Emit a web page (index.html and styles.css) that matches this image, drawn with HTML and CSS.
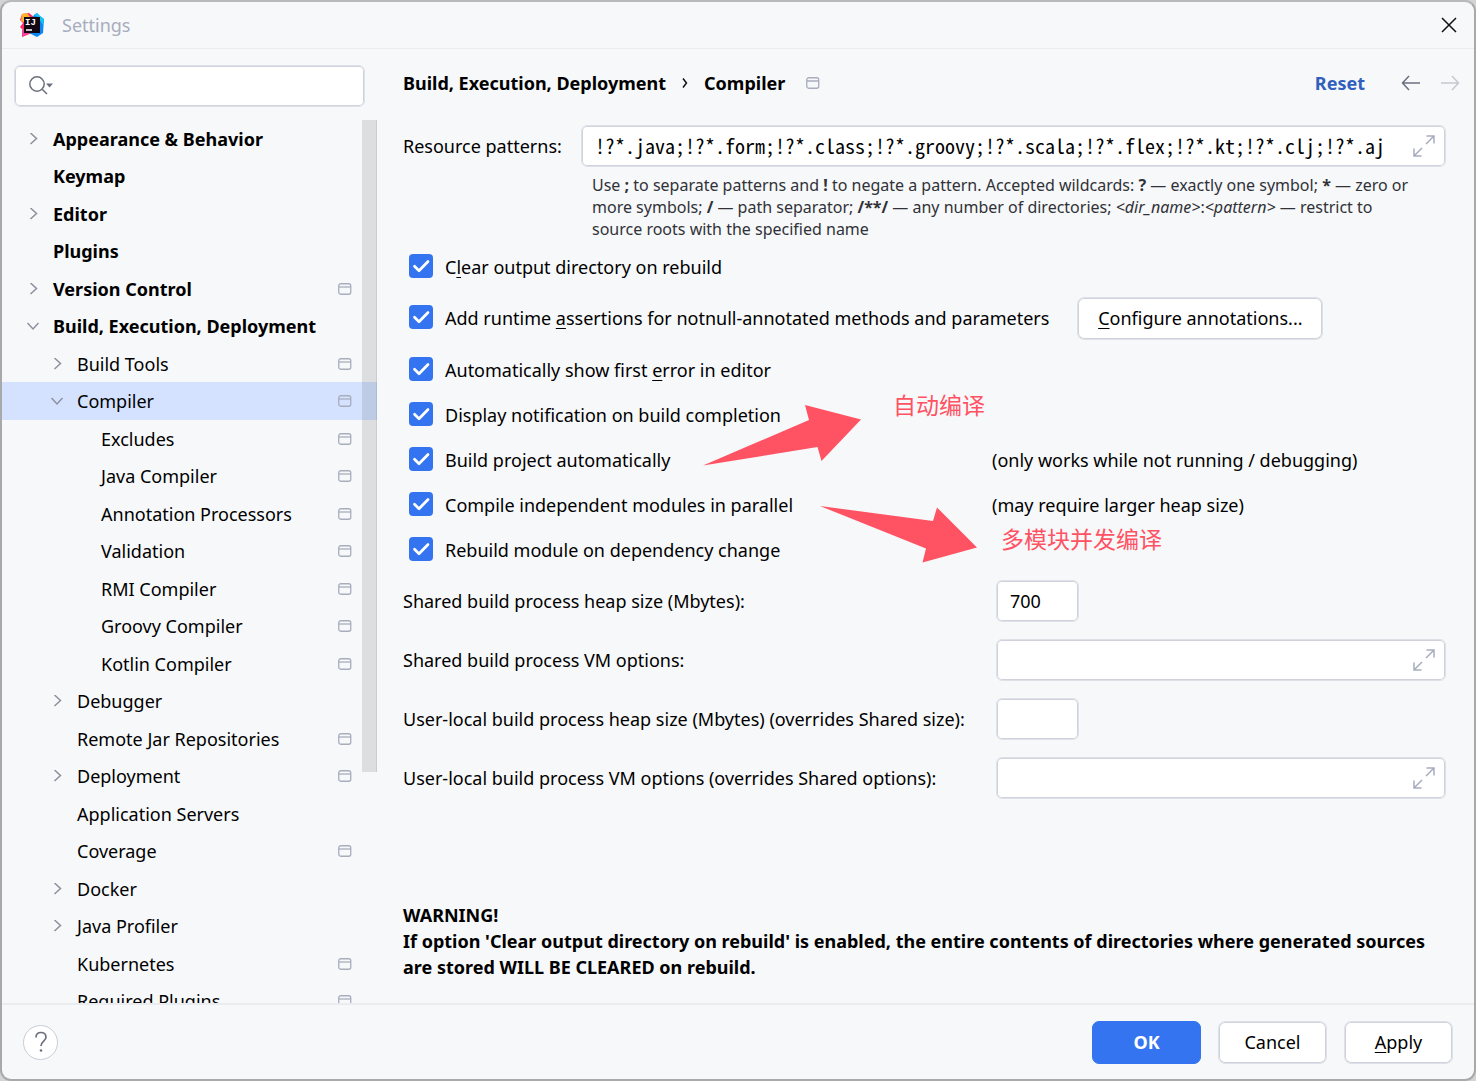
FILE: index.html
```html
<!DOCTYPE html>
<html lang="en">
<head>
<meta charset="utf-8">
<title>Settings</title>
<link rel="stylesheet" href="styles.css">
</head>
<body>
<svg class="defs" aria-hidden="true">
  <symbol id="module" viewBox="0 0 14 12"><rect x=".75" y=".75" width="12" height="10.5" rx="2" fill="none" stroke="#a8adbd" stroke-width="1.3"/><path d="M1 4H13" stroke="#a8adbd" stroke-width="1.3"/></symbol>
  <symbol id="right" viewBox="0 0 12 12"><path d="M3.500 0 9.500 5.500 3.500 11" fill="none" stroke="#8c909e" stroke-width="1.5"/></symbol>
  <symbol id="down" viewBox="0 0 12 12"><path d="M.5 3 6 9 11.500 3" fill="none" stroke="#8c909e" stroke-width="1.5"/></symbol>
  <symbol id="check" viewBox="0 0 24 24"><path d="M5.500 12.300 10 16.800 19 7.500" fill="none" stroke="#fff" stroke-width="2.700" stroke-linecap="round" stroke-linejoin="round"/></symbol>
  <symbol id="expand" viewBox="0 0 22 22"><path d="M13 9 21 1M13.500 1H21V8.500M9 13 1 21M1 13.500V21H8.500" fill="none" stroke="#a8adbd" stroke-width="1.500"/></symbol>
</svg>
<div class="window">
  <header class="titlebar">
    <svg class="logo" viewBox="0 0 24 24" aria-hidden="true">
      <path d="M2 1 9 0 14 4 12 20 2 24 3 17 0 14 3 10 0 7Z" fill="#fe2d6b"/>
      <path d="M2 1 7 0 10 4 4 9 1 8Z" fill="#fdb52a"/>
      <path d="M2 17 9 18 8 21 2 24Z" fill="#f5409b"/>
      <path d="M14 2 17 0 20 3 24 6 23 20 17 24 9 20 10 9Z" fill="#0a86f5"/>
      <path d="M14 2 17 0 20 3 24 6 23 12 18 4Z" fill="#17c5f5"/>
      <rect x="4" y="4" width="16" height="16" fill="#120712"/>
      <text x="5" y="12" class="logo-text">IJ</text>
      <path d="M6 17H12" stroke="#fff" stroke-width="1.500"/>
    </svg>
    <h1 class="title">Settings</h1>
    <button class="icon-button close" aria-label="Close"><svg viewBox="0 0 16 16" width="16" height="16"><path d="M1 1 15 15M15 1 1 15" stroke="#111" stroke-width="1.500"/></svg></button>
  </header>
  <div class="body">
    <aside class="sidebar">
      <div class="search">
        <svg width="26" height="20" viewBox="0 0 26 20" aria-hidden="true"><circle cx="9" cy="8" r="7.200" fill="none" stroke="#6c707e" stroke-width="1.500"/><path d="M14 13 19 18" stroke="#6c707e" stroke-width="1.500"/><path d="M18 7.500H25L21.500 11.500Z" fill="#6c707e"/></svg>
        <input type="search" aria-label="Search settings">
      </div>
      <nav class="tree" aria-label="Settings categories">
        <ul>
          <li class="top"><svg class="arrow"><use href="#right"/></svg><a href="#">Appearance &amp; Behavior</a></li>
          <li class="top leaf"><a href="#">Keymap</a></li>
          <li class="top"><svg class="arrow"><use href="#right"/></svg><a href="#">Editor</a></li>
          <li class="top leaf"><a href="#">Plugins</a></li>
          <li class="top"><svg class="arrow"><use href="#right"/></svg><a href="#">Version Control</a><svg class="module"><use href="#module"/></svg></li>
          <li class="top"><svg class="arrow"><use href="#down"/></svg><a href="#">Build, Execution, Deployment</a></li>
          <li class="sub"><svg class="arrow"><use href="#right"/></svg><a href="#">Build Tools</a><svg class="module"><use href="#module"/></svg></li>
          <li class="sub selected"><svg class="arrow"><use href="#down"/></svg><a href="#" aria-current="page">Compiler</a><svg class="module"><use href="#module"/></svg></li>
          <li class="deep leaf"><a href="#">Excludes</a><svg class="module"><use href="#module"/></svg></li>
          <li class="deep leaf"><a href="#">Java Compiler</a><svg class="module"><use href="#module"/></svg></li>
          <li class="deep leaf"><a href="#">Annotation Processors</a><svg class="module"><use href="#module"/></svg></li>
          <li class="deep leaf"><a href="#">Validation</a><svg class="module"><use href="#module"/></svg></li>
          <li class="deep leaf"><a href="#">RMI Compiler</a><svg class="module"><use href="#module"/></svg></li>
          <li class="deep leaf"><a href="#">Groovy Compiler</a><svg class="module"><use href="#module"/></svg></li>
          <li class="deep leaf"><a href="#">Kotlin Compiler</a><svg class="module"><use href="#module"/></svg></li>
          <li class="sub"><svg class="arrow"><use href="#right"/></svg><a href="#">Debugger</a></li>
          <li class="sub leaf"><a href="#">Remote Jar Repositories</a><svg class="module"><use href="#module"/></svg></li>
          <li class="sub"><svg class="arrow"><use href="#right"/></svg><a href="#">Deployment</a><svg class="module"><use href="#module"/></svg></li>
          <li class="sub leaf"><a href="#">Application Servers</a></li>
          <li class="sub leaf"><a href="#">Coverage</a><svg class="module"><use href="#module"/></svg></li>
          <li class="sub"><svg class="arrow"><use href="#right"/></svg><a href="#">Docker</a></li>
          <li class="sub"><svg class="arrow"><use href="#right"/></svg><a href="#">Java Profiler</a></li>
          <li class="sub leaf"><a href="#">Kubernetes</a><svg class="module"><use href="#module"/></svg></li>
          <li class="sub leaf"><a href="#">Required Plugins</a><svg class="module"><use href="#module"/></svg></li>
        </ul>
        <div class="scrollbar"></div>
      </nav>
    </aside>
    <main class="content">
      <div class="page-header">
        <h2 class="crumbs"><span>Build, Execution, Deployment</span><svg width="6" height="12" viewBox="0 0 6 12" aria-hidden="true"><path d="M1 1.500 4.500 6 1 10.500" fill="none" stroke="#111" stroke-width="1.500"/></svg><span>Compiler</span></h2>
        <svg class="module"><use href="#module"/></svg>
        <a class="reset" href="#">Reset</a>
        <button class="icon-button back" aria-label="Back"><svg width="20" height="16" viewBox="0 0 20 16"><path d="M8 1 1.500 8 8 15M1.500 8H19" fill="none" stroke="#6c707e" stroke-width="1.500"/></svg></button>
        <button class="icon-button forward" aria-label="Forward" disabled><svg width="20" height="16" viewBox="0 0 20 16"><path d="M12 1 18.500 8 12 15M18.500 8H1" fill="none" stroke="#c6c8cf" stroke-width="1.500"/></svg></button>
      </div>
      <div class="patterns">
        <label for="patterns">Resource patterns:</label>
        <div class="field"><input class="mono" id="patterns" type="text" value="!?*.java;!?*.form;!?*.class;!?*.groovy;!?*.scala;!?*.flex;!?*.kt;!?*.clj;!?*.aj"><button class="icon-button" aria-label="Expand"><svg class="expand"><use href="#expand"/></svg></button></div>
        <p class="help">Use <b>;</b> to separate patterns and <b>!</b> to negate a pattern. Accepted wildcards: <b>?</b> — exactly one symbol; <b>*</b> — zero or more symbols; <b>/</b> — path separator; <b>/**/</b> — any number of directories; <i>&lt;dir_name&gt;</i>:<i>&lt;pattern&gt;</i> — restrict to source roots with the specified name</p>
      </div>
      <div class="options">
        <div class="option"><label><span class="box"><input type="checkbox" checked><svg><use href="#check"/></svg></span><span>C<u>l</u>ear output directory on rebuild</span></label></div>
        <div class="option with-button"><label><span class="box"><input type="checkbox" checked><svg><use href="#check"/></svg></span><span>Add runtime <u>a</u>ssertions for notnull-annotated methods and parameters</span></label><button class="button configure"><span><u>C</u>onfigure annotations...</span></button></div>
        <div class="option"><label><span class="box"><input type="checkbox" checked><svg><use href="#check"/></svg></span><span>Automatically show first <u>e</u>rror in editor</span></label></div>
        <div class="option"><label><span class="box"><input type="checkbox" checked><svg><use href="#check"/></svg></span><span>Display notification on build completion</span></label></div>
        <div class="option"><label><span class="box"><input type="checkbox" checked><svg><use href="#check"/></svg></span><span>Build project automatically</span></label><span>(only works while not running / debugging)</span></div>
        <div class="option"><label><span class="box"><input type="checkbox" checked><svg><use href="#check"/></svg></span><span>Compile independent modules in parallel</span></label><span>(may require larger heap size)</span></div>
        <div class="option"><label><span class="box"><input type="checkbox" checked><svg><use href="#check"/></svg></span><span>Rebuild module on dependency change</span></label></div>
        <svg class="note-arrow auto" width="160" height="62" viewBox="0 0 160 62" aria-hidden="true"><path d="M0 60.500 106 15 102 0 158 14.500 118.500 56 114.500 42Z" fill="#ff5263"/></svg>
        <span class="note auto-note" lang="zh">自动编译</span>
        <svg class="note-arrow parallel" width="160" height="62" viewBox="0 0 160 62" aria-hidden="true"><path d="M0 1 113 16 117 2.500 157 42.500 102.500 57.500 106 43.500Z" fill="#ff5263"/></svg>
        <span class="note parallel-note" lang="zh">多模块并发编译</span>
      </div>
      <div class="settings">
        <label for="heap">Shared build process heap size (Mbytes):</label>
        <div class="field small"><input id="heap" type="text" value="700"></div>
        <label for="vm">Shared build process VM options:</label>
        <div class="field"><input id="vm" type="text"><button class="icon-button" aria-label="Expand"><svg class="expand"><use href="#expand"/></svg></button></div>
        <label for="user-heap">User-local build process heap size (Mbytes) (overrides Shared size):</label>
        <div class="field small"><input id="user-heap" type="text"></div>
        <label for="user-vm">User-local build process VM options (overrides Shared options):</label>
        <div class="field"><input id="user-vm" type="text"><button class="icon-button" aria-label="Expand"><svg class="expand"><use href="#expand"/></svg></button></div>
      </div>
      <p class="warning">WARNING!<br>If option 'Clear output directory on rebuild' is enabled, the entire contents of directories where generated sources are stored WILL BE CLEARED on rebuild.</p>
    </main>
  </div>
  <footer class="footer">
    <button class="help-button" aria-label="Help"><svg width="14" height="22" viewBox="0 0 14 22"><path d="M2 6.500C2 3 4.300 1.500 7 1.500S12 3.200 12 6.200C12 10 7 10.500 7 15" fill="none" stroke="#6c707e" stroke-width="1.700"/><circle cx="7" cy="19.500" r="1.300" fill="#6c707e"/></svg></button>
    <button class="button primary">OK</button>
    <button class="button">Cancel</button>
    <button class="button"><span><u>A</u>pply</span></button>
  </footer>
</div>
</body>
</html>
```
FILE: styles.css
```css
* { box-sizing: border-box; }
body {
  margin: 0;
  background: #d4d4d4;
  color: #000;
  font: 18px/26px "Noto Sans", "Noto Sans CJK SC", sans-serif;
}
h1, h2, p, ul { margin: 0; padding: 0; }
a { color: inherit; text-decoration: none; }
u { text-underline-offset: 3px; text-decoration-skip-ink: none; }
svg { display: block; flex: none; }
.defs { display: none; }
button, input { font: inherit; color: inherit; }
.icon-button { display: flex; padding: 0; border: 0; background: none; }

.window {
  display: flex;
  flex-direction: column;
  height: 100vh;
  border: 2px solid #a9a9ab;
  border-top-color: #b9b9b9;
  border-radius: 11px;
  background: #f7f8fa;
  overflow: hidden;
}
.titlebar {
  display: flex;
  align-items: center;
  height: 47px;
  padding: 0 17px 0 18px;
  border-bottom: 1px solid #ebecf0;
}
.logo { width: 24px; height: 24px; }
.logo-text { font: bold 9px "Liberation Mono", monospace; fill: #fff; }
.title { margin-left: 18px; color: #a8adbd; font-size: 18px; font-weight: 400; }
.close { margin-left: auto; }

.body { display: grid; grid-template-columns: 375px 1fr; flex: 1; min-height: 0; }
.sidebar { display: flex; flex-direction: column; min-height: 0; }
.search, .field {
  display: flex;
  align-items: center;
  height: 42px;
  border: 1px solid #dfe1e8;
  border-radius: 6px;
  background: #fff;
  box-shadow: inset 0 0 0 1px #cfd1dc;
}
.search { flex: none; margin: 16px 12px 13px; padding-left: 13px; }
.search input, .field input {
  flex: 1;
  min-width: 0;
  padding: 0 13px;
  border: 0;
  outline: 0;
  background: none;
}
.tree { position: relative; flex: 1; min-height: 0; overflow: hidden; }
.tree ul { list-style: none; }
.tree li { display: flex; align-items: center; gap: 14px; height: 37px; padding-right: 25px; }
.tree li:nth-child(even) { height: 38px; }
.tree .top { padding-left: 25px; font-weight: 700; }
.tree .sub { padding-left: 49px; }
.tree .top.leaf { padding-left: 51px; }
.tree .sub.leaf { padding-left: 75px; }
.tree .deep { padding-left: 99px; }
.tree .selected { background: #d4e2ff; }
.tree a { flex: 1; white-space: nowrap; }
.arrow { width: 12px; height: 12px; }
.module { width: 14px; height: 12px; }
.scrollbar {
  position: absolute;
  top: 0;
  right: 0;
  width: 15px;
  height: 652px;
  border-right: 1px solid rgba(0, 0, 0, .08);
  background: rgba(0, 0, 0, .1);
}

.content { display: flex; flex-direction: column; min-width: 0; padding: 0 28px 23px 26px; }
.page-header { display: flex; align-items: center; height: 68px; margin-right: -14px; }
.crumbs { display: flex; align-items: center; gap: 16px; margin-right: 21px; font-size: 18px; }
.reset { margin-left: auto; color: #315fbd; font-weight: 700; }
.back { margin: 0 19px 0 36px; }

.patterns { display: grid; grid-template-columns: 178px 1fr; align-items: center; padding-top: 8px; }
.patterns .mono { font-family: "Noto Sans Mono CJK SC", monospace; font-size: 20px; }
.field .icon-button { margin-right: 10px; }
.expand { width: 22px; height: 22px; }
.help { grid-column: 2; padding: 7px 24px 0 11px; color: #303238; font-size: 16px; line-height: 22px; }

.options { position: relative; padding-top: 4px; }
.option { display: grid; grid-template-columns: 589px 1fr; align-items: center; height: 45px; }
.option label { display: flex; align-items: center; gap: 12px; padding-left: 6px; white-space: nowrap; }
.with-button { display: flex; gap: 28px; height: 58px; }
.box { display: grid; width: 24px; height: 24px; margin-bottom: 2px; }
.box > * { grid-area: 1 / 1; width: 24px; height: 24px; margin: 0; }
.box input { appearance: none; border-radius: 4px; background: #3574f0; }
.box svg { pointer-events: none; }
.note, .note-arrow { position: absolute; }
.note { color: #ff5263; font-family: "Noto Sans CJK SC", sans-serif; font-size: 23px; }
.auto { left: 300px; top: 165px; }
.auto-note { left: 490px; top: 151px; }
.parallel { left: 417px; top: 265px; }
.parallel-note { left: 598px; top: 285px; }

.settings { display: grid; grid-template-columns: 593px 1fr; align-items: center; row-gap: 17px; padding-top: 8px; }
.settings label { white-space: nowrap; }
.small { width: 83px; }
.warning { margin-top: auto; font-weight: 700; }

.footer {
  display: flex;
  align-items: center;
  gap: 17px;
  height: 76px;
  padding: 0 21px;
  border-top: 2px solid #ebecf0;
}
.button {
  width: 109px;
  height: 43px;
  padding: 0;
  border: 1px solid #dfe1e8;
  border-radius: 7px;
  background: #fff;
  box-shadow: inset 0 0 0 1px #cfd1dc;
}
.configure { width: 246px; }
.primary { border-color: #3574f0; background: #3574f0; box-shadow: none; color: #fff; font-weight: 700; }
.help-button {
  display: grid;
  place-items: center;
  width: 35px;
  height: 35px;
  margin-right: auto;
  padding: 0;
  border: 1px solid #c9ccd6;
  border-radius: 50%;
  background: #fff;
}
```
